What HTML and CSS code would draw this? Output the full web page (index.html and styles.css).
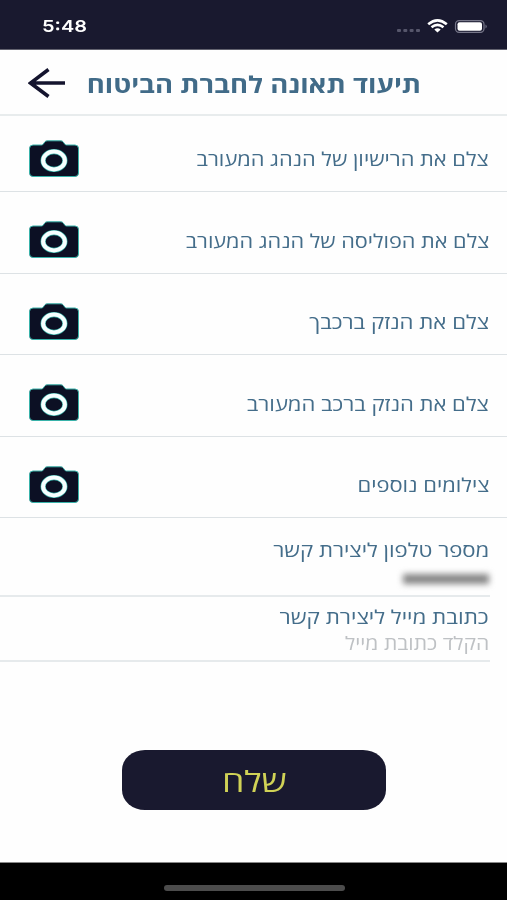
FILE: index.html
```
<!DOCTYPE html>
<html lang="he">
<head>
<meta charset="utf-8">
<title>תיעוד תאונה לחברת הביטוח</title>
<link rel="stylesheet" href="styles.css">
</head>
<body>
<svg class="defs" width="0" height="0" aria-hidden="true">
  <symbol id="camera" viewBox="0 0 52 40">
    <path d="M5 6H13.500Q14.700 6 15.300 5L16.600 3.200Q17.600 1.800 19.200 1.800H32.800Q34.400 1.800 35.400 3.200L36.700 5Q37.300 6 38.500 6H47Q50.500 6 50.500 9.500V34Q50.500 37.500 47 37.500H5Q1.500 37.500 1.500 34V9.500Q1.500 6 5 6Z" fill="#0c1024" stroke="#38b3aa" stroke-width="1"/>
    <ellipse cx="26" cy="21.500" rx="10.900" ry="8.900" fill="none" stroke="#38b3aa" stroke-width="5.200"/>
    <ellipse cx="26" cy="21.500" rx="10.900" ry="8.900" fill="none" stroke="#f7ffff" stroke-width="4"/>
  </symbol>
</svg>
<div class="screen">
  <div class="status">
    <span class="time">5:48</span>
    <svg class="signals" viewBox="0 0 92 18" width="92" height="18">
      <g fill="#56566b"><rect x="1" y="11" width="4" height="3" rx="1"/><rect x="7.300" y="11" width="4" height="3" rx="1"/><rect x="13.600" y="11" width="4" height="3" rx="1"/><rect x="20" y="11" width="4" height="3" rx="1"/></g>
      <path d="M32.200 6.200Q41.500 -1.600 50.800 6.200M35.500 9.300Q41.500 4.600 47.500 9.300" fill="none" stroke="#fff" stroke-width="2.600"/>
      <path d="M38.300 11.600Q41.500 9 44.700 11.600L41.500 14.500Z" fill="#fff"/>
      <rect x="59.500" y="2.700" width="28.500" height="11.600" rx="3.600" fill="none" stroke="#77778a" stroke-width="1.200"/>
      <rect x="61.500" y="4.300" width="24.500" height="8.500" rx="2" fill="#fff"/>
      <path d="M89.500 6.500Q92 8.500 89.500 10.500Z" fill="#77778a"/>
    </svg>
  </div>
  <header class="header">
    <svg class="back" viewBox="0 0 38 32" width="38" height="32"><path d="M37 16H2.500M20.500 2.500L2.500 16L20.500 29.500" fill="none" stroke="#14142e" stroke-width="3.600"/></svg>
    <h1 class="title">תיעוד תאונה לחברת הביטוח</h1>
  </header>
  <main class="form">
    <div class="row license"><svg class="camera"><use href="#camera"/></svg><span class="label">צלם את הרישיון של הנהג המעורב</span></div>
    <div class="row policy"><svg class="camera"><use href="#camera"/></svg><span class="label">צלם את הפוליסה של הנהג המעורב</span></div>
    <div class="row own-damage"><svg class="camera"><use href="#camera"/></svg><span class="label">צלם את הנזק ברכבך</span></div>
    <div class="row other-damage"><svg class="camera"><use href="#camera"/></svg><span class="label">צלם את הנזק ברכב המעורב</span></div>
    <div class="row more"><svg class="camera"><use href="#camera"/></svg><span class="label">צילומים נוספים</span></div>
    <div class="field phone"><span class="label">מספר טלפון ליצירת קשר</span><span class="hidden-number"></span></div>
    <div class="field mail"><span class="label">כתובת מייל ליצירת קשר</span><span class="label hint">הקלד כתובת מייל</span></div>
    <button class="send"><span class="send-text">שלח</span></button>
  </main>
  <footer class="home"><span class="bar"></span></footer>
</div>
</body>
</html>
```
FILE: styles.css
```
* { box-sizing: border-box; }
body { margin: 0; background: #fefefe; font-family: "Open Sans", "Noto Sans", "DejaVu Sans", sans-serif; }
.defs { position: absolute; }
.screen { width: 507px; height: 900px; display: flex; flex-direction: column; overflow: hidden; }
.status { height: 50px; flex: none; background: #19192f; border-bottom: 1px solid #62626f; display: flex; justify-content: space-between; padding: 18px 19px 0 41.5px; }
.time { color: #fff; font: 600 16.5px/17px Inter, sans-serif; transform: scaleX(1.21); transform-origin: left; }
.header { height: 66px; flex: none; border-bottom: 2px solid #e8eced; display: flex; align-items: center; padding: 2px 0 0 28px; }
.back { flex: none; }
.title { margin: 2px 86px 0 auto; direction: rtl; white-space: nowrap; color: #416b88; font-size: 23px; line-height: 32px; font-weight: 700; transform: scaleX(1.198); transform-origin: right; }
.form { flex: 1; display: flex; flex-direction: column; }
.row { height: 81.5px; flex: none; border-bottom: 1.5px solid #dde2e5; display: flex; justify-content: space-between; align-items: flex-end; padding: 0 18px 12.5px 28px; }
.license { height: 76px; }
.camera { width: 52px; height: 40px; flex: none; }
.label { direction: rtl; white-space: nowrap; color: #446d8a; font-size: 19px; font-weight: 500; line-height: 26px; transform: scaleX(1.147); transform-origin: right; }
.row .label { margin-bottom: 6.5px; }
.policy .label { transform: scaleX(1.14); }
.own-damage .label { transform: scaleX(1.167); }
.other-damage .label { transform: scaleX(1.159); }
.more .label { transform: scaleX(1.153); }
.field { flex: none; margin-right: 17px; padding-right: 1px; border-bottom: 2px solid #e6eaec; display: flex; flex-direction: column; align-items: flex-end; }
.phone { height: 79px; padding-top: 19px; }
.phone .label { transform: scaleX(1.166); }
.mail .label { transform: scaleX(1.177); }
.mail { height: 65px; padding-top: 7px; }
.hidden-number { width: 86px; height: 10px; margin-top: 11px; background: #858585; filter: blur(3px); }
.field .hint { color: #bec1c4; font-size: 18px; font-weight: 400; transform: scaleX(1.17); }
.send { align-self: center; width: 264px; height: 60px; margin: 88px 0 0 1px; padding: 0; border: 0; border-radius: 23px / 20px; background: #19192f; color: #d0d256; font: 29px/62px "Open Sans", sans-serif; }
.send-text { display: inline-block; transform: scaleX(1.23); }
.home { height: 38px; flex: none; background: #000; border-top: 1px solid #888; display: flex; justify-content: center; align-items: flex-end; padding-bottom: 9px; }
.bar { width: 181px; height: 6px; margin-left: 1px; border-radius: 3px; background: #4c4c4c; }
```
